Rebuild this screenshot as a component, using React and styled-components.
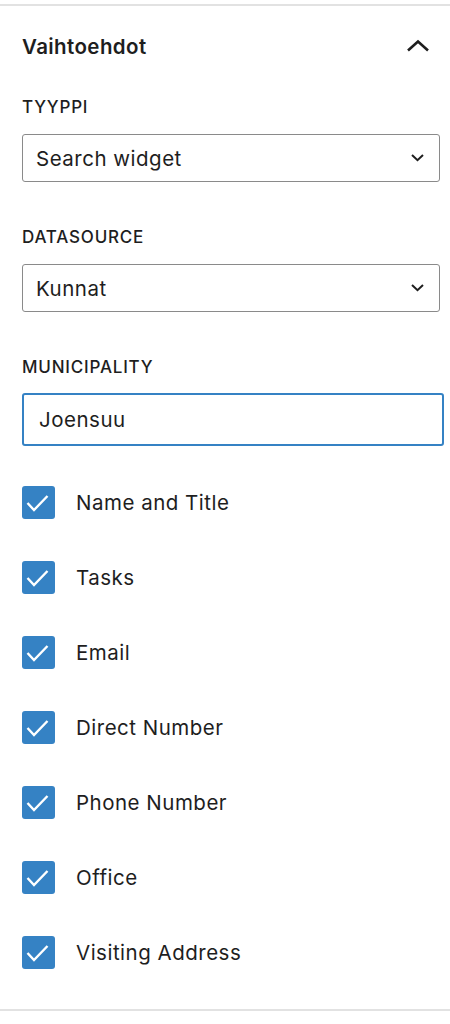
import React from 'react';
import styled, { createGlobalStyle } from 'styled-components';

const GlobalStyle = createGlobalStyle`
  body {
    margin: 0;
    background: #fff;
    font-family: Inter, 'Noto Sans', 'Liberation Sans', sans-serif;
    color: #1e1e1e;
  }
`;

const Panel = styled.section`
  width: 450px;
  margin-top: 4px;
  border-top: 2px solid #e2e2e2;
  border-bottom: 2px solid #e2e2e2;
  box-sizing: border-box;
`;

const Header = styled.div`
  height: 80px;
  display: flex;
  align-items: center;
  justify-content: space-between;
  padding: 0 20px 0 22px;
`;

const Title = styled.h2`
  margin: 0;
  font-size: 20.5px;
  font-weight: 600;
  color: #1e1e1e;
  letter-spacing: 0.4px;
`;

const Body = styled.div`
  padding: 11px 10px 40px 22px;
`;

const Field = styled.div`
  margin-bottom: ${props => props.gap || 45}px;
`;

const Label = styled.div`
  font-size: 17px;
  line-height: 20px;
  font-weight: 500;
  text-transform: uppercase;
  letter-spacing: 0.8px;
  margin-bottom: ${props => props.gap || 17}px;
`;

const SelectBox = styled.div`
  height: 48px;
  box-sizing: border-box;
  border: 1.5px solid #8a8a8a;
  border-radius: 3px;
  display: flex;
  align-items: center;
  justify-content: space-between;
  padding: 0 15px 0 13px;
  font-size: 20.5px;
  letter-spacing: 0.5px;
`;

const TextInput = styled.div`
  height: 53px;
  width: calc(100% + 4px);
  box-sizing: border-box;
  border: 2px solid #3582c4;
  border-radius: 3px;
  display: flex;
  align-items: center;
  padding-left: 15px;
  font-size: 20.5px;
  letter-spacing: 0.5px;
`;

const CheckList = styled.div`
  display: flex;
  flex-direction: column;
  gap: 42px;
`;

const CheckRow = styled.label`
  display: flex;
  align-items: center;
  gap: 21px;
  font-size: 20.5px;
  letter-spacing: 0.5px;
  height: 33px;
`;

const Box = styled.span`
  width: 33px;
  height: 33px;
  border-radius: 3px;
  background: ${props => (props.checked ? '#3582c4' : '#fff')};
  display: flex;
  align-items: center;
  justify-content: center;
  flex-shrink: 0;
`;

const ChevronUp = () => (
  <svg width="24" height="14" viewBox="0 0 24 14">
    <path d="M2 11.5 L12 2.5 L22 11.5" fill="none" stroke="#1e1e1e" strokeWidth="2.6" />
  </svg>
);

const ChevronDown = () => (
  <svg width="13" height="8" viewBox="0 0 13 8">
    <path d="M1 1 L6.5 6.2 L12 1" fill="none" stroke="#1e1e1e" strokeWidth="2" />
  </svg>
);

const Check = () => (
  <svg width="33" height="33" viewBox="0 0 33 33">
    <path d="M5.5 17 L12 24 L25.5 10" fill="none" stroke="#fff" strokeWidth="2.4" />
  </svg>
);

const options = [
  'Name and Title',
  'Tasks',
  'Email',
  'Direct Number',
  'Phone Number',
  'Office',
  'Visiting Address',
];

const App = () => (
  <>
    <GlobalStyle />
    <Panel>
      <Header>
        <Title>Vaihtoehdot</Title>
        <ChevronUp />
      </Header>
      <Body>
        <Field>
          <Label>Tyyppi</Label>
          <SelectBox>
            <span>Search widget</span>
            <ChevronDown />
          </SelectBox>
        </Field>
        <Field>
          <Label>Datasource</Label>
          <SelectBox>
            <span>Kunnat</span>
            <ChevronDown />
          </SelectBox>
        </Field>
        <Field gap={40}>
          <Label gap={16}>Municipality</Label>
          <TextInput>Joensuu</TextInput>
        </Field>
        <CheckList>
          {options.map(o => (
            <CheckRow key={o}>
              <Box checked>
                <Check />
              </Box>
              {o}
            </CheckRow>
          ))}
        </CheckList>
      </Body>
    </Panel>
  </>
);

export default App;
